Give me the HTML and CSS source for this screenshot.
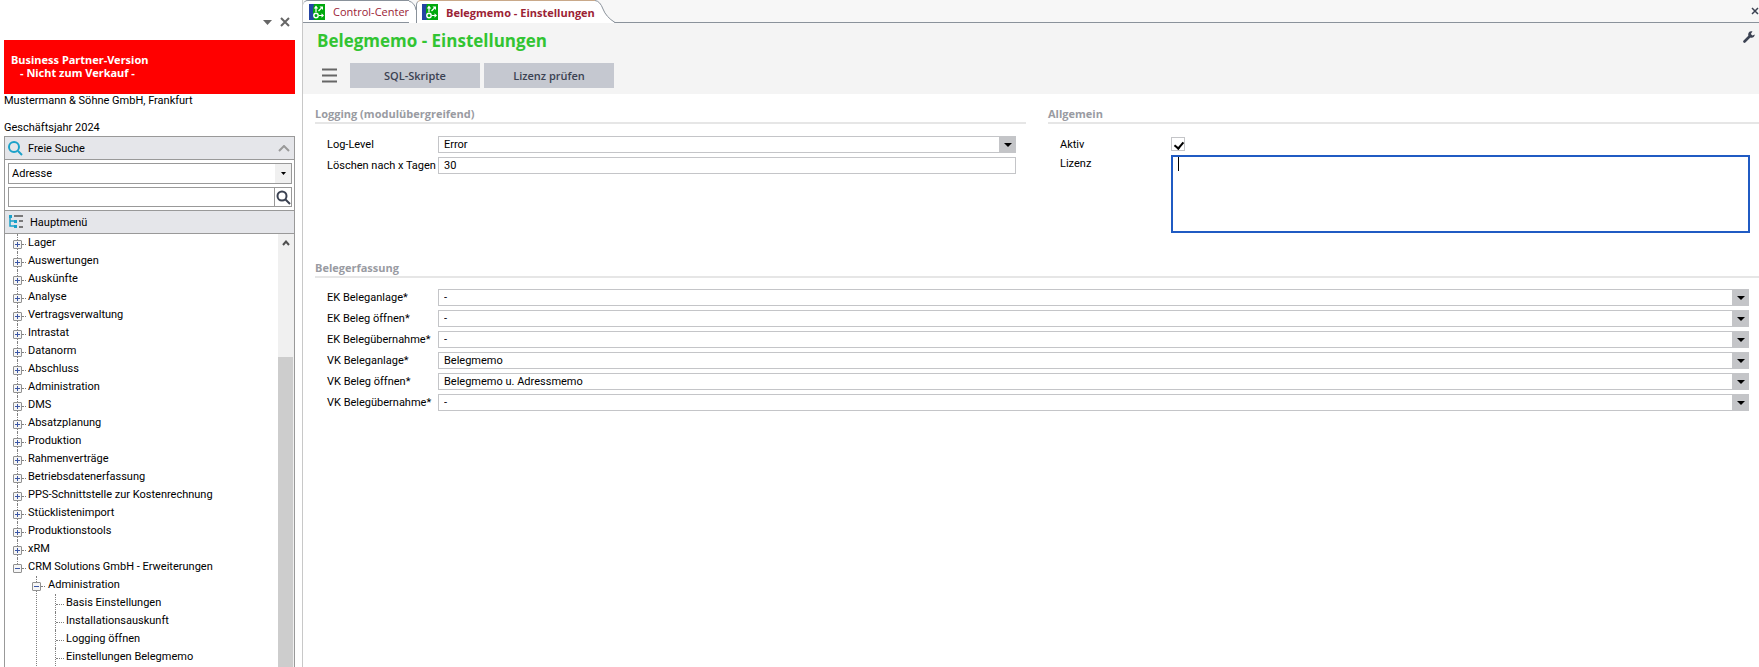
FILE: index.html
```html
<!DOCTYPE html>
<html lang="de">
<head>
  <meta charset="UTF-8">
  <title>Belegmemo - Einstellungen</title>
  <link rel="stylesheet" href="styles.css">
</head>
<body>

  <svg width="0" height="0" class="defs">
    <symbol id="app-icon" viewBox="0 0 16 16">
      <rect width="16" height="16" fill="#00a80d"/>
      <path d="M0 0h5Q3 7 5 16H0z" fill="#2444a4"/>
      <circle cx="7" cy="11.500" r="2.200" fill="none" stroke="#fff" stroke-width="1.400"/>
      <path d="M7 8V4M9.500 7l3-3M10 11.500h3" stroke="#fff" stroke-width="1.200"/>
      <path d="M7 1.500L4.800 4.500h4.400zM10.500 2.500H14V6zM12.500 9.200l2.500 2.300-2.500 2.300z" fill="#fff"/>
    </symbol>
  </svg>

  <!-- SIDEBAR -->
  <aside class="sidebar">
    <div class="sidebar-tools">
      <button class="icon-btn" aria-label="Menü"><svg width="9" height="5"><path d="M0 0h9L4.500 5z" fill="#666"/></svg></button>
      <button class="icon-btn" aria-label="Schließen"><svg width="10" height="10"><path d="M1 1l8 8M9 1l-8 8" stroke="#666" stroke-width="2"/></svg></button>
    </div>

    <div class="banner">
      Business Partner-Version<br>
      <span>- Nicht zum Verkauf -</span>
    </div>
    <div class="company">Mustermann &amp; Söhne GmbH, Frankfurt</div>
    <div class="company year">Geschäftsjahr 2024</div>

    <div class="panel">
      <div class="panel-head">
        <svg width="15" height="15"><circle cx="6" cy="6" r="5" fill="none" stroke="#1ba1c9" stroke-width="2"/><path d="M10 10l4 4" stroke="#1ba1c9" stroke-width="2"/></svg>
        <span>Freie Suche</span>
        <svg class="collapse" width="12" height="7"><path d="M1 6l5-5 5 5" fill="none" stroke="#999" stroke-width="2"/></svg>
      </div>
      <div class="search">
        <div class="combo">
          <select aria-label="Suchbereich"><option>Adresse</option></select>
          <span class="combo-arrow"><svg width="5" height="3"><path d="M0 0h5L2.500 3z"/></svg></span>
        </div>
        <div class="search-row">
          <input type="text" aria-label="Suchbegriff">
          <button aria-label="Suchen"><svg width="15" height="15"><circle cx="6" cy="6" r="4.500" fill="none" stroke="#3b4252" stroke-width="2"/><path d="M9.500 9.500l4.500 4.500" stroke="#3b4252" stroke-width="2"/></svg></button>
        </div>
      </div>
      <div class="panel-head menu-head">
        <svg width="15" height="14"><path d="M1 1v10h6M1 6h6" fill="none" stroke="#1ba1c9" stroke-width="1.500"/><path d="M0 0h3v3H0zM5 5h3v3H5zM5 10h3v3H5z" fill="#1ba1c9"/><path d="M5 1h9M10 6h4M10 12h4" stroke="#555" stroke-width="1.500"/></svg>
        <span>Hauptmenü</span>
      </div>

      <div class="tree-wrap">
        <ul class="tree">
          <li><i class="box plus"></i>Lager</li>
          <li><i class="box plus"></i>Auswertungen</li>
          <li><i class="box plus"></i>Auskünfte</li>
          <li><i class="box plus"></i>Analyse</li>
          <li><i class="box plus"></i>Vertragsverwaltung</li>
          <li><i class="box plus"></i>Intrastat</li>
          <li><i class="box plus"></i>Datanorm</li>
          <li><i class="box plus"></i>Abschluss</li>
          <li><i class="box plus"></i>Administration</li>
          <li><i class="box plus"></i>DMS</li>
          <li><i class="box plus"></i>Absatzplanung</li>
          <li><i class="box plus"></i>Produktion</li>
          <li><i class="box plus"></i>Rahmenverträge</li>
          <li><i class="box plus"></i>Betriebsdatenerfassung</li>
          <li><i class="box plus"></i>PPS-Schnittstelle zur Kostenrechnung</li>
          <li><i class="box plus"></i>Stücklistenimport</li>
          <li><i class="box plus"></i>Produktionstools</li>
          <li><i class="box plus"></i>xRM</li>
          <li class="last"><i class="box"></i>CRM Solutions GmbH - Erweiterungen
            <ul>
              <li><i class="box"></i>Administration
                <ul class="leaves">
                  <li>Basis Einstellungen</li>
                  <li>Installationsauskunft</li>
                  <li>Logging öffnen</li>
                  <li>Einstellungen Belegmemo</li>
                </ul>
              </li>
            </ul>
          </li>
        </ul>
        <div class="scrollbar">
          <svg width="8" height="6"><path d="M1 5l3-3.500L7 5" fill="none" stroke="#505050" stroke-width="2"/></svg>
          <div class="thumb"></div>
        </div>
      </div>
    </div>
  </aside>

  <!-- MAIN -->
  <main class="main">
    <nav class="tabs">
      <a class="tab" href="#"><svg width="16" height="16"><use href="#app-icon"/></svg>Control-Center
        <svg class="tab-edge" width="8" height="23"><path d="M0 0v23h8V10Q6 3 0 0z" fill="#fff"/><path d="M0 1Q6 3 7 10" fill="none" stroke="#8a929b"/></svg>
      </a>
      <a class="tab active" href="#"><svg width="16" height="16"><use href="#app-icon"/></svg>Belegmemo - Einstellungen
        <svg class="tab-edge" width="20" height="23"><path d="M0 0Q5 1 8 9T20 23H0z" fill="#fff"/><path d="M0 .5Q5 1 8 9T20 22.500" fill="none" stroke="#8a929b"/></svg>
      </a>
      <button class="icon-btn tab-close" aria-label="Tab schließen"><svg width="8" height="8"><path d="M1 1l6 6M7 1L1 7" stroke="#3b4252" stroke-width="1.500"/></svg></button>
    </nav>

    <header class="page-head">
      <div class="title-row">
        <h1>Belegmemo - Einstellungen</h1>
        <button class="icon-btn wrench" aria-label="Anpassen"><svg width="12" height="12" viewBox="0 0 12 12"><path d="M1.500 10.500L6.500 5.500" stroke="#3b4252" stroke-width="2.600" stroke-linecap="round"/><path d="M9.500.3A3.300 3.300 0 1 0 11.800 3.500L9.500 4.500 7.800 3z" fill="#3b4252"/></svg></button>
      </div>
      <div class="toolbar">
        <button class="icon-btn" aria-label="Menü"><svg width="15" height="15"><path d="M0 1.500h15M0 7.500h15M0 13.500h15" stroke="#666" stroke-width="2"/></svg></button>
        <button class="btn">SQL-Skripte</button>
        <button class="btn">Lizenz prüfen</button>
      </div>
    </header>

    <div class="content">
      <section class="logging">
        <h2>Logging (modulübergreifend)</h2>
        <div class="fields">
          <label for="loglevel">Log-Level</label>
          <div class="combo">
            <select id="loglevel"><option>Error</option></select>
            <span class="combo-arrow"><svg width="8" height="4"><path d="M0 0h8L4 4z"/></svg></span>
          </div>
          <label for="days">Löschen nach x Tagen</label>
          <input type="text" id="days" value="30">
        </div>
      </section>

      <section class="general">
        <h2>Allgemein</h2>
        <div class="fields">
          <label for="aktiv">Aktiv</label>
          <input type="checkbox" id="aktiv" checked>
          <label for="lizenz">Lizenz</label>
          <div class="memo">
            <textarea id="lizenz"></textarea>
            <span class="caret"></span>
          </div>
        </div>
      </section>

      <section class="wide">
        <h2>Belegerfassung</h2>
        <div class="fields">
          <label for="ek1">EK Beleganlage*</label>
          <div class="combo">
            <select id="ek1"><option>-</option></select>
            <span class="combo-arrow"><svg width="8" height="4"><path d="M0 0h8L4 4z"/></svg></span>
          </div>
          <label for="ek2">EK Beleg öffnen*</label>
          <div class="combo">
            <select id="ek2"><option>-</option></select>
            <span class="combo-arrow"><svg width="8" height="4"><path d="M0 0h8L4 4z"/></svg></span>
          </div>
          <label for="ek3">EK Belegübernahme*</label>
          <div class="combo">
            <select id="ek3"><option>-</option></select>
            <span class="combo-arrow"><svg width="8" height="4"><path d="M0 0h8L4 4z"/></svg></span>
          </div>
          <label for="vk1">VK Beleganlage*</label>
          <div class="combo">
            <select id="vk1"><option>Belegmemo</option></select>
            <span class="combo-arrow"><svg width="8" height="4"><path d="M0 0h8L4 4z"/></svg></span>
          </div>
          <label for="vk2">VK Beleg öffnen*</label>
          <div class="combo">
            <select id="vk2"><option>Belegmemo u. Adressmemo</option></select>
            <span class="combo-arrow"><svg width="8" height="4"><path d="M0 0h8L4 4z"/></svg></span>
          </div>
          <label for="vk3">VK Belegübernahme*</label>
          <div class="combo">
            <select id="vk3"><option>-</option></select>
            <span class="combo-arrow"><svg width="8" height="4"><path d="M0 0h8L4 4z"/></svg></span>
          </div>
        </div>
      </section>
    </div>
  </main>

</body>
</html>
```
FILE: styles.css
```css
* {
  box-sizing: border-box;
}

body {
  margin: 0;
  display: flex;
  height: 100vh;
  overflow: hidden;
  font-family: Roboto, "Noto Sans", sans-serif;
  font-size: 11px;
  color: #000;
  background: #fff;
}

button, input, select, textarea {
  font: inherit;
  color: inherit;
  margin: 0;
}

svg {
  display: block;
  flex: none;
}

.defs {
  position: absolute;
}

.icon-btn {
  border: none;
  background: none;
  padding: 0;
}

/* Sidebar */
.sidebar {
  flex: none;
  width: 303px;
  padding: 0 7px 0 4px;
  border-right: 1px solid #c8c8c8;
  display: flex;
  flex-direction: column;
}

.sidebar-tools {
  height: 40px;
  padding: 4px 5px 0 0;
  display: flex;
  justify-content: flex-end;
  align-items: center;
  gap: 8px;
}

.banner {
  height: 54px;
  padding: 13px 7px 0;
  background: #f00;
  color: #fff;
  font-family: "Noto Sans", sans-serif;
  font-weight: bold;
  line-height: 13px;
}

.banner span {
  padding-left: 9px;
}

.company {
  height: 14px;
  line-height: 14px;
}

.year {
  margin: 13px 0 1px;
}

.panel {
  flex: 1;
  min-height: 0;
  display: flex;
  flex-direction: column;
  border: 1px solid #999;
  border-bottom: none;
}

.panel-head {
  height: 23px;
  padding: 0 4px 0 3px;
  display: flex;
  align-items: center;
  gap: 5px;
  background: #e5e6ea;
  border-bottom: 1px solid #999;
}

.menu-head {
  height: 24px;
  border-top: 1px solid #999;
  gap: 6px;
  padding-left: 4px;
}

.collapse {
  margin-left: auto;
}

.search {
  padding: 3px 2px 3px 3px;
}

.combo {
  position: relative;
}

.combo select {
  appearance: none;
  width: 100%;
  height: 17px;
  padding: 0 20px 0 5px;
  border: 1px solid #c4c5c8;
  border-radius: 0;
  background: #fff;
  display: block;
}

.combo-arrow {
  position: absolute;
  top: 0;
  right: 0;
  width: 17px;
  height: 100%;
  background: #c4c5c8;
  display: flex;
  align-items: center;
  justify-content: center;
  pointer-events: none;
}

.search .combo select {
  height: 21px;
  padding-left: 3px;
  border-color: #999;
}

.search .combo-arrow {
  top: 1px;
  right: 1px;
  width: 16px;
  height: 19px;
  background: #f0f0f0;
}

.search-row {
  display: flex;
  margin-top: 3px;
  height: 20px;
  border: 1px solid #999;
}

.search-row input {
  flex: 1;
  min-width: 0;
  border: none;
  padding: 0 3px;
}

.search-row button {
  width: 17px;
  padding: 0 0 0 1px;
  border: none;
  border-left: 1px solid #999;
  background: #fff;
}

/* Tree */
.tree-wrap {
  flex: 1;
  min-height: 0;
  display: flex;
  overflow: hidden;
}

.tree {
  flex: 1;
}

.tree, .tree ul {
  list-style: none;
  margin: 0;
  padding: 0;
}

.tree li {
  position: relative;
  line-height: 18px;
  padding-left: 23px;
  white-space: nowrap;
}

.tree ul li {
  padding-left: 20px;
}

.tree .leaves li {
  padding-left: 18px;
}

/* dotted connector lines */
.tree li::before {
  content: "";
  position: absolute;
  left: 12px;
  top: 0;
  bottom: 0;
  border-left: 1px dotted #808080;
}

.tree li::after {
  content: "";
  position: absolute;
  left: 17px;
  top: 10px;
  width: 4px;
  border-top: 1px dotted #808080;
}

.tree .last::before {
  bottom: auto;
  height: 10px;
}

.tree ul li::before {
  left: 8px;
}

.tree ul li::after {
  left: 13px;
}

.tree .leaves li::before {
  left: 7px;
}

.tree .leaves li::after {
  left: 8px;
  width: 8px;
}

.box {
  position: absolute;
  z-index: 1;
  left: 8px;
  top: 6px;
  width: 9px;
  height: 9px;
  border: 1px solid #919191;
  border-radius: 1px;
  background: linear-gradient(#3c57a5, #3c57a5) center / 5px 1px no-repeat, #f6f6f6;
}

.plus {
  background:
    linear-gradient(#3c57a5, #3c57a5) center / 5px 1px no-repeat,
    linear-gradient(#3c57a5, #3c57a5) center / 1px 5px no-repeat,
    #f6f6f6;
}

.tree ul .box {
  left: 4px;
}

.scrollbar {
  width: 16px;
  padding-top: 6px;
  border-right: 1px solid #f0f0f0;
  background: #f0f0f0;
  display: flex;
  flex-direction: column;
  align-items: center;
}

.thumb {
  flex: 1;
  width: 100%;
  margin-top: 111px;
  background: #cdcdcd;
}

/* Main */
.main {
  flex: 1;
  min-width: 0;
}

.tabs {
  display: flex;
  height: 23px;
  background: #f7f7f7;
  border-bottom: 1px solid #8a929b;
}

.tab {
  position: relative;
  display: flex;
  align-items: center;
  gap: 8px;
  height: 22px;
  padding: 0 0 0 6px;
  border-top: 1px solid #8a929b;
  border-radius: 5px 0 0 0;
  background: #fff;
  color: #9b2335;
  font-family: "Open Sans", "Noto Sans", sans-serif;
  font-size: 11px;
  text-decoration: none;
  white-space: nowrap;
}

.tab-edge {
  position: absolute;
  left: 100%;
  top: -1px;
}

.tab.active {
  z-index: 1;
  height: 23px;
  margin-left: 7px;
  border-top-color: #c9a98a;
  border-left: 1px solid #8a929b;
  padding-left: 5px;
  font-weight: bold;
}

.tab-close {
  margin-left: auto;
  width: 8px;
}

.page-head {
  background: #f4f4f4;
  height: 71px;
}

.title-row {
  display: flex;
  justify-content: space-between;
  padding: 6px 4px 0 14px;
}

h1 {
  margin: 0;
  font-family: "Open Sans", "Noto Sans", sans-serif;
  font-size: 17px;
  line-height: 24px;
  font-weight: bold;
  color: #32c432;
}

.wrench {
  height: 12px;
  margin-top: 2px;
}

.toolbar {
  display: flex;
  gap: 4px;
  padding: 10px 0 0 19px;
}

.toolbar .icon-btn {
  margin-right: 9px;
}

.btn {
  width: 130px;
  height: 25px;
  padding: 0;
  border: none;
  background: #c5c8d0;
  color: #3b4252;
  font-family: "Open Sans", "Noto Sans", sans-serif;
  font-weight: 600;
}

.content {
  display: grid;
  grid-template-columns: 1fr 1fr;
  column-gap: 22px;
  padding: 12px 0 0 12px;
}

.wide {
  grid-column: 1 / 3;
  margin-top: 27px;
}

h2 {
  margin: 0;
  height: 18px;
  line-height: 16px;
  font-family: "Open Sans", "Noto Sans", sans-serif;
  font-size: 11px;
  font-weight: bold;
  color: #999ba2;
  border-bottom: 2px solid #e6e6e6;
}

.fields {
  display: grid;
  grid-template-columns: 111px 1fr;
  row-gap: 4px;
  padding: 12px 10px 0 12px;
}

.logging .fields {
  align-content: start;
}

.general .fields {
  row-gap: 2px;
  padding-right: 9px;
}

.wide .fields {
  padding-top: 11px;
}

.fields label {
  line-height: 17px;
  white-space: nowrap;
}

.fields input[type="text"] {
  width: 100%;
  height: 17px;
  padding: 0 5px;
  border: 1px solid #c4c5c8;
}

.fields input[type="checkbox"] {
  appearance: none;
  width: 14px;
  height: 14px;
  margin-top: 1px;
  border: 1px solid #c4c5c8;
  position: relative;
}

.fields input[type="checkbox"]:checked::after {
  content: "";
  position: absolute;
  left: 4px;
  top: 2px;
  width: 4px;
  height: 7px;
  border: solid #000;
  border-width: 0 2px 2px 0;
  transform: rotate(40deg);
}

.memo {
  position: relative;
}

.memo textarea {
  display: block;
  width: 100%;
  height: 78px;
  padding: 2px 4px;
  border: 2px solid #205bc3;
  border-radius: 0;
  outline: none;
  resize: none;
}

.caret {
  position: absolute;
  left: 7px;
  top: 2px;
  width: 1px;
  height: 14px;
  background: #000;
}
```
